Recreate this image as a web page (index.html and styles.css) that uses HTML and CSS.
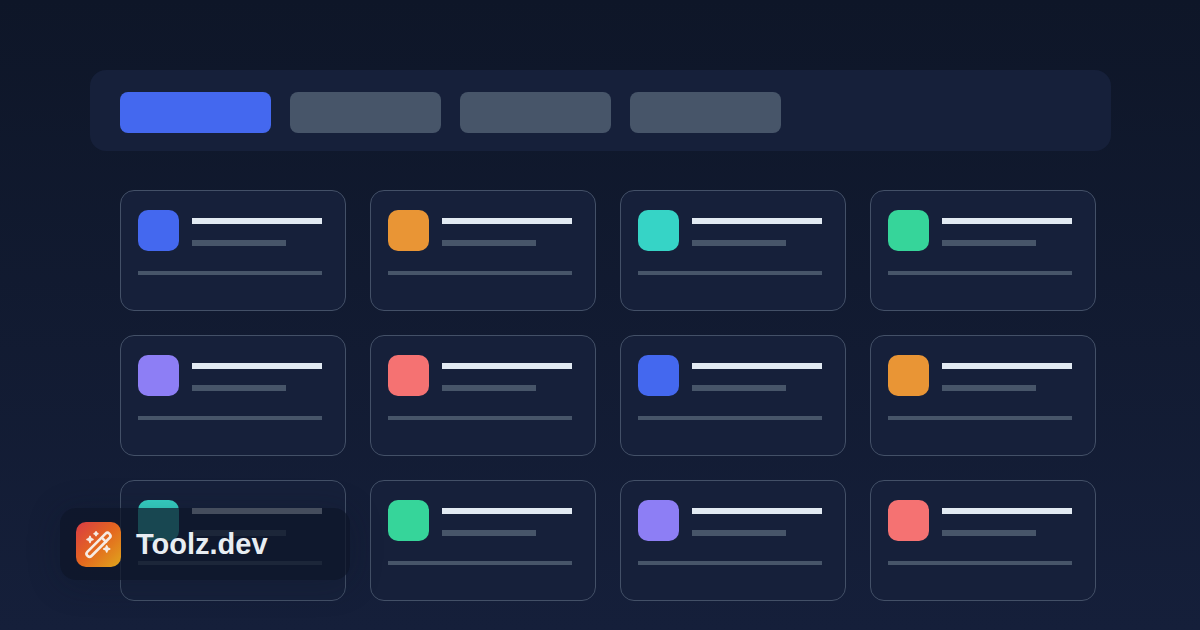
FILE: index.html
```html
<!DOCTYPE html>
<html lang="en">
<head>
    <meta charset="UTF-8">
    <meta name="viewport" content="width=device-width, initial-scale=1.0">
    <title>Toolz.dev</title>
    <link rel="stylesheet" href="styles.css">
</head>
<body>
    <main class="page">
        <nav class="toolbar">
            <button class="tab active" type="button" aria-label="Tab 1"></button>
            <button class="tab" type="button" aria-label="Tab 2"></button>
            <button class="tab" type="button" aria-label="Tab 3"></button>
            <button class="tab" type="button" aria-label="Tab 4"></button>
        </nav>

        <div class="cards">
            <div class="card">
                <div class="card-head">
                    <div class="tile blue"></div>
                    <div class="lines"><div class="line title"></div><div class="line subtitle"></div></div>
                </div>
                <div class="rule"></div>
            </div>
            <div class="card">
                <div class="card-head">
                    <div class="tile orange"></div>
                    <div class="lines"><div class="line title"></div><div class="line subtitle"></div></div>
                </div>
                <div class="rule"></div>
            </div>
            <div class="card">
                <div class="card-head">
                    <div class="tile teal"></div>
                    <div class="lines"><div class="line title"></div><div class="line subtitle"></div></div>
                </div>
                <div class="rule"></div>
            </div>
            <div class="card">
                <div class="card-head">
                    <div class="tile green"></div>
                    <div class="lines"><div class="line title"></div><div class="line subtitle"></div></div>
                </div>
                <div class="rule"></div>
            </div>
            <div class="card">
                <div class="card-head">
                    <div class="tile purple"></div>
                    <div class="lines"><div class="line title"></div><div class="line subtitle"></div></div>
                </div>
                <div class="rule"></div>
            </div>
            <div class="card">
                <div class="card-head">
                    <div class="tile red"></div>
                    <div class="lines"><div class="line title"></div><div class="line subtitle"></div></div>
                </div>
                <div class="rule"></div>
            </div>
            <div class="card">
                <div class="card-head">
                    <div class="tile blue"></div>
                    <div class="lines"><div class="line title"></div><div class="line subtitle"></div></div>
                </div>
                <div class="rule"></div>
            </div>
            <div class="card">
                <div class="card-head">
                    <div class="tile orange"></div>
                    <div class="lines"><div class="line title"></div><div class="line subtitle"></div></div>
                </div>
                <div class="rule"></div>
            </div>
            <div class="card">
                <div class="card-head">
                    <div class="tile teal"></div>
                    <div class="lines"><div class="line title"></div><div class="line subtitle"></div></div>
                </div>
                <div class="rule"></div>
            </div>
            <div class="card">
                <div class="card-head">
                    <div class="tile green"></div>
                    <div class="lines"><div class="line title"></div><div class="line subtitle"></div></div>
                </div>
                <div class="rule"></div>
            </div>
            <div class="card">
                <div class="card-head">
                    <div class="tile purple"></div>
                    <div class="lines"><div class="line title"></div><div class="line subtitle"></div></div>
                </div>
                <div class="rule"></div>
            </div>
            <div class="card">
                <div class="card-head">
                    <div class="tile red"></div>
                    <div class="lines"><div class="line title"></div><div class="line subtitle"></div></div>
                </div>
                <div class="rule"></div>
            </div>
        </div>

        <div class="brand">
            <svg class="logo" viewBox="0 0 45 45" aria-hidden="true">
                <defs>
                    <linearGradient id="logoFill" x1="0" y1="0" x2="1" y2="1">
                        <stop offset="0" stop-color="#d93c45"/>
                        <stop offset="0.5" stop-color="#e4671f"/>
                        <stop offset="1" stop-color="#dfa61c"/>
                    </linearGradient>
                </defs>
                <rect width="45" height="45" rx="10" fill="url(#logoFill)"/>
                <!-- wand -->
                <g fill="none" stroke="#f6ebe4" stroke-width="2.6" stroke-linecap="round" stroke-linejoin="round">
                    <rect x="-15.5" y="-2.9" width="31" height="5.8" rx="2.6" transform="translate(22.5 22.8) rotate(-45)"/>
                    <path d="M26 15.8l4 4"/>
                </g>
                <!-- sparkles -->
                <g fill="#f6ebe4" stroke="#f6ebe4" stroke-width="1.6" stroke-linejoin="round">
                    <path d="M14 14.4l.9 2.1 2.1.9-2.1.9-.9 2.1-.9-2.1-2.1-.9 2.1-.9z"/>
                    <path d="M20 9.8l.6 1.3 1.3.6-1.3.6-.6 1.3-.6-1.3-1.3-.6 1.3-.6z"/>
                    <path d="M30.7 23.9l.9 2.1 2.1.9-2.1.9-.9 2.1-.9-2.1-2.1-.9 2.1-.9z"/>
                </g>
            </svg>
            <span class="brand-name">Toolz.dev</span>
        </div>
    </main>
</body>
</html>
```

FILE: styles.css
```css
* {
    box-sizing: border-box;
}

body {
    margin: 0;
    font-family: "Liberation Sans", Arial, sans-serif;
    background-color: #0f172a;
}

.page {
    position: relative;
    min-height: 100vh;
    padding: 70px 89px 29px 90px;
    background: linear-gradient(#0e1628, #151f3a);
}

.toolbar {
    display: flex;
    gap: 19px;
    padding: 22px 30px 18px;
    border-radius: 16px;
    background-color: #16203a;
}

.tab {
    width: 151px;
    height: 41px;
    padding: 0;
    border: none;
    border-radius: 8px;
    background-color: #475569;
    cursor: pointer;
}

.tab.active {
    background-color: #4468ef;
}

.cards {
    display: grid;
    grid-template-columns: repeat(4, 1fr);
    gap: 24px;
    margin: 39px 15px 0 30px;
}

.card {
    padding: 19px 23px 35px 17px;
    border: 1px solid #435067;
    border-radius: 14px;
    background-color: #16203a;
}

.card-head {
    display: flex;
    gap: 13px;
}

.tile {
    flex: none;
    width: 41px;
    height: 41px;
    border-radius: 10px;
}

.blue {
    background-color: #4468ef;
}

.orange {
    background-color: #e99535;
}

.teal {
    background-color: #36d4c6;
}

.green {
    background-color: #36d59a;
}

.purple {
    background-color: #8d7ef5;
}

.red {
    background-color: #f57272;
}

.lines {
    flex: 1;
    padding-top: 8px;
}

.line {
    height: 6px;
}

.title {
    margin-bottom: 16px;
    background-color: #e2eaf2;
}

.subtitle {
    width: 72%;
    background-color: #475569;
}

.rule {
    height: 4px;
    margin-top: 20px;
    background-color: #475569;
}

.brand {
    position: absolute;
    left: 60px;
    bottom: 50px;
    display: flex;
    align-items: center;
    gap: 15px;
    width: 290px;
    height: 72px;
    padding: 0 16px;
    border-radius: 16px;
    background-color: rgba(13, 22, 40, 0.74);
    box-shadow: 0 4px 32px rgba(13, 22, 40, 0.3);
}

.logo {
    width: 45px;
    height: 45px;
}

.brand-name {
    font-size: 29px;
    line-height: 36px;
    font-weight: bold;
    color: #e8edf2;
}
```
